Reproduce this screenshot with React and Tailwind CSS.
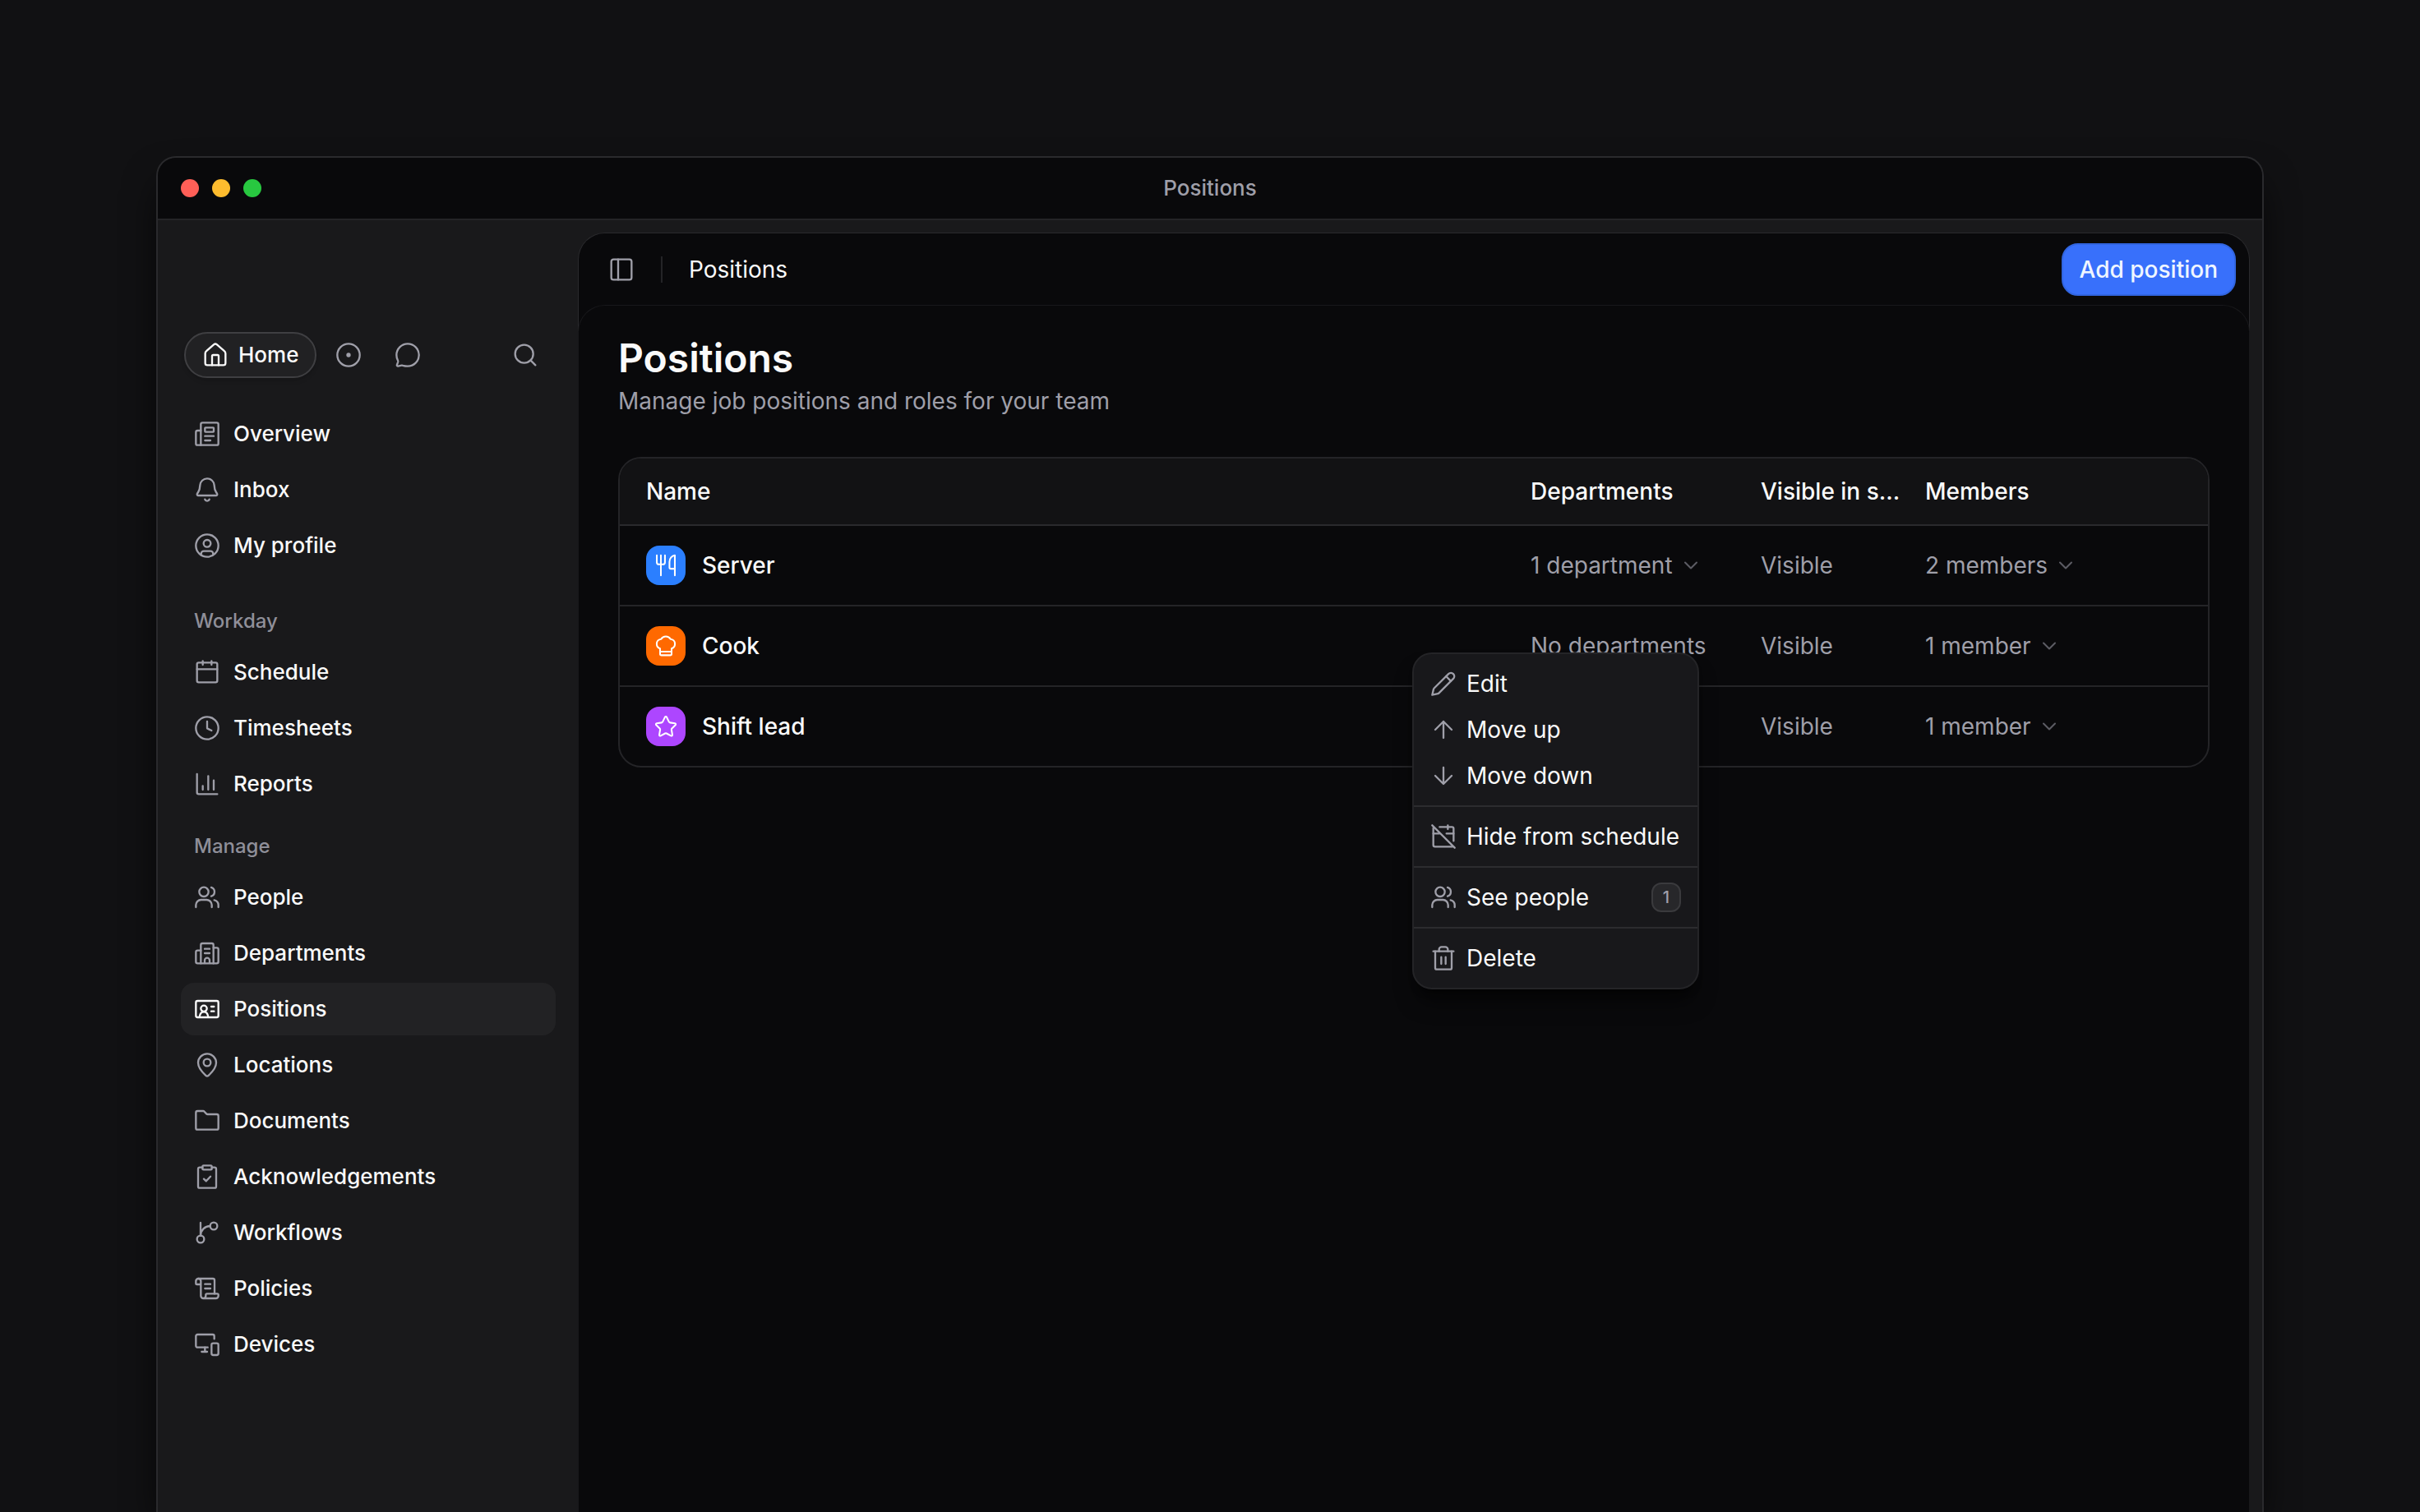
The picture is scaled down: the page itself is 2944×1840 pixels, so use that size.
import clsx from "clsx";
import { ChevronDown } from "lucide-react";

// All glyphs are drawn on a 24 unit grid with a 1.75 stroke
const paths = {
	home: [
		"M2.75 10.6V19.25a2 2 0 0 0 2 2h14.5a2 2 0 0 0 2-2V10.6a3 3 0 0 0-1.1-2.3l-6.9-5.95a2 2 0 0 0-2.5 0L3.85 8.3a3 3 0 0 0-1.1 2.3z",
		"M9 21.25V13a1 1 0 0 1 1-1h4a1 1 0 0 1 1 1v8.25",
	],
	chat: [
		"M12 22.25c5.66 0 10.25-4.59 10.25-10.25S17.66 1.75 12 1.75 1.75 6.34 1.75 12c0 1.8.45 3.4 1.2 4.9.25.5.3 1 .15 1.5l-.95 2.75c-.2.65.35 1.2 1 1.1l3.3-.75c.4-.1.8-.05 1.2.1 1.35.4 2.8.65 4.35.65z",
	],
	search: [
		"M11 2.75a8.25 8.25 0 1 0 0 16.5 8.25 8.25 0 0 0 0-16.5z",
		"M17 17l4.25 4.25",
	],
	overview: [
		"M7.75 1.75h13a1.5 1.5 0 0 1 1.5 1.5v17.5a1.5 1.5 0 0 1-1.5 1.5h-14.5V3.25a1.5 1.5 0 0 1 1.5-1.5z",
		"M6.25 22.25h-3a1.5 1.5 0 0 1-1.5-1.5V10.5A1.5 1.5 0 0 1 3.25 9h3",
		"M10.5 6.25h7a.5.5 0 0 1 .5.5v3a.5.5 0 0 1-.5.5h-7a.5.5 0 0 1-.5-.5v-3a.5.5 0 0 1 .5-.5z",
		"M10 14h8M10 18h5",
	],
	inbox: [
		"M12 1.75A6.5 6.5 0 0 0 5.5 7.95c-.1 2.9-.6 4.6-1.7 6.3-.3.45-.6.9-.85 1.35-.4.8.1 1.65 1 1.65h16.1c.9 0 1.4-.85 1-1.65-.25-.45-.55-.9-.85-1.35-1.1-1.7-1.6-3.4-1.7-6.3A6.5 6.5 0 0 0 12 1.75z",
		"M10 20.75c.4.9 1.15 1.5 2 1.5s1.6-.6 2-1.5",
	],
	profile: [
		"M12 1.75a10.25 10.25 0 1 0 0 20.5 10.25 10.25 0 0 0 0-20.5z",
		"M12 6.75a3.25 3.25 0 1 0 0 6.5 3.25 3.25 0 0 0 0-6.5z",
		"M6.5 20.25v-.75A2.5 2.5 0 0 1 9 17h6a2.5 2.5 0 0 1 2.5 2.5v.75",
	],
	schedule: [
		"M4.25 3.25h15.5a1.5 1.5 0 0 1 1.5 1.5v15a1.5 1.5 0 0 1-1.5 1.5H4.25a1.5 1.5 0 0 1-1.5-1.5v-15a1.5 1.5 0 0 1 1.5-1.5z",
		"M2.75 9.25h18.5M8 1.75v3.5M16 1.75v3.5",
	],
	clock: [
		"M12 1.75a10.25 10.25 0 1 0 0 20.5 10.25 10.25 0 0 0 0-20.5z",
		"M12 6v6.25l4 2",
	],
	chart: [
		"M2.75 3v16.75a1.5 1.5 0 0 0 1.5 1.5h17",
		"M8 13.75v3.5M13 4.75v12.5M18 8.75v8.5",
	],
	people: [
		"M9 2.75a4.25 4.25 0 1 0 0 8.5 4.25 4.25 0 0 0 0-8.5z",
		"M1.75 21v-2a4.75 4.75 0 0 1 4.75-4.75h5A4.75 4.75 0 0 1 16.25 19v2",
		"M15.75 2.9a4.25 4.25 0 0 1 0 8.1",
		"M18.5 14.5A4.75 4.75 0 0 1 22.25 19v2",
	],
	building: [
		"M6.25 21.25V4.5a1.5 1.5 0 0 1 1.5-1.5h8.5a1.5 1.5 0 0 1 1.5 1.5v16.75",
		"M6.25 9.5h-3a1.5 1.5 0 0 0-1.5 1.5v8.75a1.5 1.5 0 0 0 1.5 1.5h17.5a1.5 1.5 0 0 0 1.5-1.5V8.5a1.5 1.5 0 0 0-1.5-1.5h-3",
		"M9.75 8h4.5M9.75 12h4.5",
		"M9.75 21v-2.5a2.25 2.25 0 0 1 4.5 0V21",
	],
	idCard: [
		"M3.25 4.5h17.5a1.5 1.5 0 0 1 1.5 1.5v12a1.5 1.5 0 0 1-1.5 1.5H3.25a1.5 1.5 0 0 1-1.5-1.5V6a1.5 1.5 0 0 1 1.5-1.5z",
		"M9 8.75a2.75 2.75 0 1 0 0 5.5 2.75 2.75 0 0 0 0-5.5z",
		"M5 19.25c.35-2.8 1.9-4.75 4-4.75s3.65 1.95 4 4.75",
		"M15.75 9.75h2.5M15.75 14h2.5",
	],
	pin: [
		"M12 22.25c-.45 0-.85-.25-1.2-.6C8.3 19.4 3.75 14.8 3.75 10a8.25 8.25 0 0 1 16.5 0c0 4.8-4.55 9.4-7.05 11.65-.35.35-.75.6-1.2.6z",
		"M12 6.5a3.25 3.25 0 1 0 0 6.5 3.25 3.25 0 0 0 0-6.5z",
	],
	folder: [
		"M1.75 18.5V4.5A1.5 1.5 0 0 1 3.25 3h5.1a1.5 1.5 0 0 1 1.1.5L11.3 5.5a1.5 1.5 0 0 0 1.1.5h8.35a1.5 1.5 0 0 1 1.5 1.5v11a1.5 1.5 0 0 1-1.5 1.5H3.25a1.5 1.5 0 0 1-1.5-1.5z",
	],
	clipboard: [
		"M7.75 3.5h-2.5A1.5 1.5 0 0 0 3.75 5v15.75a1.5 1.5 0 0 0 1.5 1.5h13.5a1.5 1.5 0 0 0 1.5-1.5V5a1.5 1.5 0 0 0-1.5-1.5h-2.5",
		"M8.75 1.75h6.5a1 1 0 0 1 1 1V4.5a1 1 0 0 1-1 1h-6.5a1 1 0 0 1-1-1V2.75a1 1 0 0 1 1-1z",
		"M9 14l2.1 2 3.9-4.25",
	],
	branch: [
		"M6 3v11.75",
		"M6 14.75a3.25 3.25 0 1 0 0 6.5 3.25 3.25 0 0 0 0-6.5z",
		"M18 2.75a3.25 3.25 0 1 0 0 6.5 3.25 3.25 0 0 0 0-6.5z",
		"M14.75 6A8.75 8.75 0 0 0 6 14.75",
	],
	scroll: [
		"M4 3h13.25a1.5 1.5 0 0 1 1.5 1.5v12.25",
		"M6.25 8.25h-3.5a1 1 0 0 1-1-1v-2a2.25 2.25 0 0 1 4.5 0v13.5A2.25 2.25 0 0 0 8.5 21H20a2.25 2.25 0 0 0 2.25-2.25v-1a1 1 0 0 0-1-1h-9.5a1 1 0 0 0-1 1v1a2.25 2.25 0 0 1-2.25 2.25",
		"M10 8h5M10 12h5",
	],
	devices: [
		"M18.5 7V4.5A1.5 1.5 0 0 0 17 3H3.25a1.5 1.5 0 0 0-1.5 1.5v8.75a1.5 1.5 0 0 0 1.5 1.5H12.5",
		"M10 14.75v3.75M7 18.75h5",
		"M17.5 11h3.25a1.5 1.5 0 0 1 1.5 1.5v7.75a1.5 1.5 0 0 1-1.5 1.5H17.5a1.5 1.5 0 0 1-1.5-1.5V12.5a1.5 1.5 0 0 1 1.5-1.5z",
	],
	sidebar: [
		"M4.75 2.75h14.5a2 2 0 0 1 2 2v14.5a2 2 0 0 1-2 2H4.75a2 2 0 0 1-2-2V4.75a2 2 0 0 1 2-2z",
		"M9 2.75v18.5",
	],
	pencil: [
		"M1.75 22.25l1.2-5.1a2 2 0 0 1 .55-1L16.6 3.05a3.1 3.1 0 0 1 4.4 0 3.1 3.1 0 0 1 0 4.4L7.9 20.5a2 2 0 0 1-1 .55z",
		"M14.4 5.25l4.4 4.4",
	],
	arrowUp: ["M12 19.5V4.5M4.5 12 12 4.5l7.5 7.5"],
	arrowDown: ["M12 4.5v15M4.5 12l7.5 7.5 7.5-7.5"],
	calendarOff: [
		"M1.75 1.75l20.5 20.5",
		"M2.75 4.25v15.5a1.5 1.5 0 0 0 1.5 1.5h16",
		"M8.5 3.25h11.25a1.5 1.5 0 0 1 1.5 1.5V16",
		"M16 1.75v3.5M14.75 9.25h6.5M2.75 9.25h5.5",
	],
	trash: [
		"M2.75 5.75h18.5",
		"M4.5 5.75v15a1.5 1.5 0 0 0 1.5 1.5h12a1.5 1.5 0 0 0 1.5-1.5v-15",
		"M8 5.75V4a2.25 2.25 0 0 1 2.25-2.25h3.5A2.25 2.25 0 0 1 16 4v1.75",
		"M10 11v6.25M14 11v6.25",
	],
	utensils: [
		"M2.6 1.5v7.25A2.25 2.25 0 0 0 4.85 11h4a2.25 2.25 0 0 0 2.25-2.25V1.5M6.85 1.5v21",
		"M21.4 22.5v-21c-3.2.5-5.6 3.4-5.6 6.75v5.8a1.5 1.5 0 0 0 1.5 1.5h4.1",
	],
	chef: [
		"M6 20.25V14.8a5.2 5.2 0 0 1-3.5-4.95 5 5 0 0 1 4.6-4.95 5.7 5.7 0 0 1 9.8 0 5 5 0 0 1 4.6 4.95A5.2 5.2 0 0 1 18 14.8v5.45a1.5 1.5 0 0 1-1.5 1.5h-9a1.5 1.5 0 0 1-1.5-1.5z",
		"M6 18h12",
	],
	star: [
		"M11.1 2.3a1 1 0 0 1 1.8 0l2.35 4.9a1.5 1.5 0 0 0 1.15.83l5.1.72a1 1 0 0 1 .56 1.72l-3.72 3.66a1.5 1.5 0 0 0-.43 1.33l.9 5.25a1 1 0 0 1-1.46 1.06l-4.65-2.5a1.5 1.5 0 0 0-1.4 0l-4.65 2.5a1 1 0 0 1-1.46-1.06l.9-5.25a1.5 1.5 0 0 0-.43-1.33l-3.72-3.66A1 1 0 0 1 2.5 8.75l5.1-.72a1.5 1.5 0 0 0 1.15-.83z",
	],
};

const Icon = ({ name, className = "size-8" }) => (
	<svg
		viewBox="0 0 24 24"
		fill="none"
		stroke="currentColor"
		strokeWidth="1.75"
		strokeLinecap="round"
		strokeLinejoin="round"
		aria-hidden="true"
		className={clsx("shrink-0", className)}
	>
		{paths[name].map((d) => (
			<path key={d} d={d} />
		))}
	</svg>
);

const navGroups = [
	{
		items: [
			{ label: "Overview", icon: "overview" },
			{ label: "Inbox", icon: "inbox" },
			{ label: "My profile", icon: "profile" },
		],
	},
	{
		title: "Workday",
		className: "mt-[30px]",
		items: [
			{ label: "Schedule", icon: "schedule" },
			{ label: "Timesheets", icon: "clock" },
			{ label: "Reports", icon: "chart" },
		],
	},
	{
		title: "Manage",
		className: "mt-[14px]",
		items: [
			{ label: "People", icon: "people" },
			{ label: "Departments", icon: "building" },
			{ label: "Positions", icon: "idCard", active: true },
			{ label: "Locations", icon: "pin" },
			{ label: "Documents", icon: "folder" },
			{ label: "Acknowledgements", icon: "clipboard" },
			{ label: "Workflows", icon: "branch" },
			{ label: "Policies", icon: "scroll" },
			{ label: "Devices", icon: "devices" },
		],
	},
];

const positions = [
	{ name: "Server", icon: "utensils", color: "bg-[#2b7fff]", departments: "1 department", members: "2 members" },
	{ name: "Cook", icon: "chef", color: "bg-[#ff6900]", departments: null, members: "1 member" },
	{ name: "Shift lead", icon: "star", color: "bg-[#ad46ff]", departments: "1 department", members: "1 member" },
];

const menuGroups = [
	[
		{ label: "Edit", icon: "pencil" },
		{ label: "Move up", icon: "arrowUp" },
		{ label: "Move down", icon: "arrowDown" },
	],
	[{ label: "Hide from schedule", icon: "calendarOff" }],
	[{ label: "See people", icon: "people", count: 1 }],
	[{ label: "Delete", icon: "trash" }],
];

const TitleBar = () => (
	<div className="grid h-[76px] shrink-0 grid-cols-3 items-center border-b-2 border-[#242427] bg-[#09090b] px-7">
		<div className="flex gap-4">
			<span className="size-[22px] rounded-full bg-[#ff5f57]" />
			<span className="size-[22px] rounded-full bg-[#febc2e]" />
			<span className="size-[22px] rounded-full bg-[#28c840]" />
		</div>
		<div className="text-center text-[26px] leading-8 font-medium text-[#9f9fa9]">Positions</div>
	</div>
);

const Sidebar = () => (
	<aside className="w-[512px] shrink-0 px-7 pt-[136px] text-[26px] leading-8 font-medium text-zinc-50">
		<div className="mb-9 flex items-center gap-1.5 px-1 text-[#9f9fa9]">
			<button className="flex h-14 items-center gap-3 rounded-full border-2 border-[#3f3f42] bg-[#212123] px-5 text-zinc-50 shadow-md">
				<Icon name="home" />
				Home
			</button>
			<button aria-label="Activity" className="flex h-14 w-[66px] items-center justify-center">
				<svg viewBox="0 0 24 24" fill="none" className="size-8" aria-hidden="true">
					<circle cx="12" cy="12" r="10.25" stroke="currentColor" strokeWidth="1.75" />
					<circle cx="12" cy="12" r="2" fill="currentColor" />
				</svg>
			</button>
			<button aria-label="Messages" className="flex h-14 w-[66px] items-center justify-center">
				<Icon name="chat" />
			</button>
			<button aria-label="Search" className="ml-auto flex h-14 w-[66px] items-center justify-center">
				<Icon name="search" />
			</button>
		</div>
		<nav>
			{navGroups.map((group) => (
				<div key={group.items[0].label} className={group.className}>
					{group.title && (
						<h2 className="flex h-[60px] items-center px-4 text-2xl font-medium text-[#8f8f99]">
							{group.title}
						</h2>
					)}
					<ul className="flex flex-col gap-1">
						{group.items.map((item) => (
							<li key={item.label}>
								<a
									href="#"
									className={clsx(
										"flex h-16 items-center gap-4 rounded-2xl px-4",
										item.active && "bg-[#222224]",
									)}
								>
									<Icon
										name={item.icon}
										className={clsx("size-8", !item.active && "text-[#9f9fa9]")}
									/>
									{item.label}
								</a>
							</li>
						))}
					</ul>
				</div>
			))}
		</nav>
	</aside>
);

const CountButton = ({ children }) => (
	<button className="flex items-center gap-2">
		{children}
		<ChevronDown className="size-7 text-[#5c5c64]" strokeWidth={1.75} />
	</button>
);

const PositionsTable = () => (
	<div className="overflow-hidden rounded-[28px] border-2 border-[#242427]">
		<table className="w-full table-fixed border-collapse text-left text-[28px] leading-10">
			<colgroup>
				<col />
				<col className="w-[280px]" />
				<col className="w-[200px]" />
				<col className="w-[360px]" />
			</colgroup>
			<thead className="bg-[#121214] text-zinc-50">
				<tr className="h-[81px] border-b-2 border-[#2a2a2d]">
					<th className="pr-4 pl-8 font-medium">Name</th>
					<th className="px-4 font-medium">Departments</th>
					<th className="truncate pr-2 pl-4 font-medium">Visible in schedule</th>
					<th className="px-4 font-medium">Members</th>
				</tr>
			</thead>
			<tbody className="text-[#9f9fa9]">
				{positions.map((position) => (
					<tr key={position.name} className="h-[98px] border-b-2 border-[#242427] last:h-[97px] last:border-b-0">
						<td className="pr-4 pl-8">
							<div className="flex items-center gap-5 font-medium text-zinc-50">
								<span
									className={clsx(
										"flex size-12 items-center justify-center rounded-2xl text-white",
										position.color,
									)}
								>
									<Icon name={position.icon} className="size-7" />
								</span>
								{position.name}
							</div>
						</td>
						<td className="px-4 whitespace-nowrap">
							{position.departments ? <CountButton>{position.departments}</CountButton> : "No departments"}
						</td>
						<td className="px-4">Visible</td>
						<td className="px-4">
							<CountButton>{position.members}</CountButton>
						</td>
					</tr>
				))}
			</tbody>
		</table>
	</div>
);

const RowMenu = () => (
	<div
		role="menu"
		className="absolute top-[238px] right-[621px] min-w-[349px] divide-y-2 divide-[#2c2c2f] rounded-3xl border-2 border-[#242427] bg-[#18181b] text-[28px] leading-10 text-zinc-50 shadow-xl shadow-black/50"
	>
		{menuGroups.map((group) => (
			<div key={group[0].label} role="group" className="py-2">
				{group.map((item) => (
					<button
						key={item.label}
						role="menuitem"
						className="flex h-14 w-full items-center gap-3 px-5 whitespace-nowrap"
					>
						<Icon name={item.icon} className="size-8 text-[#9f9fa9]" />
						{item.label}
						{item.count && (
							<span className="ml-auto flex size-9 items-center justify-center rounded-xl border-2 border-[#3a3a3d] bg-[#27272a] text-xl font-medium text-[#9f9fa9]">
								{item.count}
							</span>
						)}
					</button>
				))}
			</div>
		))}
	</div>
);

const App = () => {
	return (
		<div className="flex h-screen flex-col overflow-hidden bg-[#111113] px-[190px] pt-[190px] font-[Inter,sans-serif] antialiased">
			<div className="flex min-h-0 flex-1 flex-col overflow-hidden rounded-t-3xl border-2 border-b-0 border-[#2a2a2d] bg-[#19191b] shadow-2xl shadow-black">
				<TitleBar />
				<div className="flex min-h-0 flex-1">
					<Sidebar />
					<main className="mt-4 mr-4 flex min-w-0 flex-1 flex-col rounded-t-[32px] bg-[#09090b] ring-1 ring-[#2a2a2d]">
						<header className="flex h-[88px] shrink-0 items-center pr-4 pl-9">
							<button aria-label="Toggle sidebar" className="text-[#9f9fa9]">
								<Icon name="sidebar" />
							</button>
							<div className="mx-8 h-8 w-0.5 bg-[#242427]" />
							<div className="text-[28px] leading-10 text-zinc-50">Positions</div>
							<button className="ml-auto h-16 rounded-[20px] border-2 border-[#3165e0] bg-[#3870fb] px-5 text-[28px] leading-10 font-medium text-blue-50">
								Add position
							</button>
						</header>
						<section className="flex-1 rounded-t-[32px] px-12 pt-9 ring-1 ring-[#18181b]">
							<h1 className="text-5xl leading-14 font-semibold text-zinc-50">Positions</h1>
							<p className="mt-1 text-[28px] leading-10 text-[#9f9fa9]">
								Manage job positions and roles for your team
							</p>
							<div className="relative mt-12">
								<PositionsTable />
								<RowMenu />
							</div>
						</section>
					</main>
				</div>
			</div>
		</div>
	);
};

export default App;
